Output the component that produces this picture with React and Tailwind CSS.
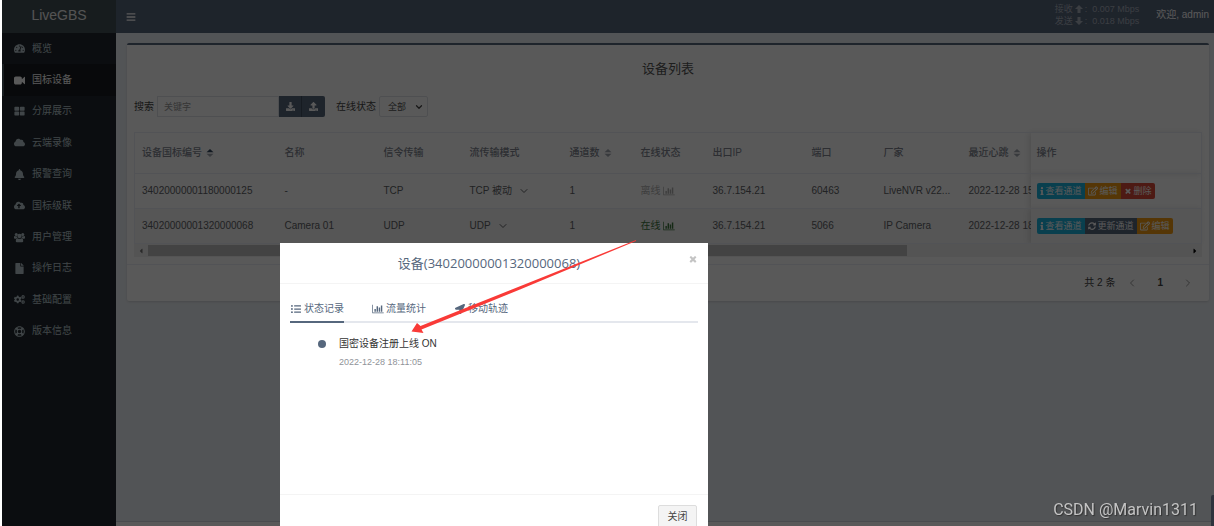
import React, { useState } from 'react'
import {
  FaTachometerAlt, FaCloud, FaBell, FaCloudUploadAlt, FaFile, FaCogs, FaRegLifeRing, FaBars,
  FaDownload, FaUpload, FaInfo, FaRegEdit, FaListUl, FaLocationArrow, FaSyncAlt, FaCaretLeft, FaCaretRight,
} from 'react-icons/fa'
import { ChevronDown, ChevronLeft, ChevronRight } from 'lucide-react'

const BarChart = ({ className }) => (
  <svg viewBox="0 0 2048 1792" fill="currentColor" className={className}>
    <path d="M640 896v512H384V896h256zm384-512v1024H768V384h256zm1024 1152v128H0V128h128v1408h1920zM1408 640v768h-256V640h256zm384-384v1152h-256V256h256z" />
  </svg>
)

const VideoCamera = ({ className }) => (
  <svg viewBox="0 0 1792 1792" fill="currentColor" className={className}>
    <path d="M1792 352v1088q0 42-39 59-13 5-25 5-27 0-45-19l-403-403v166q0 119-84.500 203.500t-203.500 84.500h-704q-119 0-203.500-84.500t-84.500-203.500v-704q0-119 84.500-203.500t203.500-84.500h704q119 0 203.500 84.500t84.500 203.500v165l403-402q18-19 45-19 12 0 25 5 39 17 39 59z" />
  </svg>
)

const Tiles = ({ className }) => (
  <svg viewBox="0 0 1792 1792" fill="currentColor" className={className}>
    <path d="M832 1024v384q0 52-38 90t-90 38h-512q-52 0-90-38t-38-90v-384q0-52 38-90t90-38h512q52 0 90 38t38 90zm0-768v384q0 52-38 90t-90 38h-512q-52 0-90-38t-38-90v-384q0-52 38-90t90-38h512q52 0 90 38t38 90zm896 768v384q0 52-38 90t-90 38h-512q-52 0-90-38t-38-90v-384q0-52 38-90t90-38h512q52 0 90 38t38 90zm0-768v384q0 52-38 90t-90 38h-512q-52 0-90-38t-38-90v-384q0-52 38-90t90-38h512q52 0 90 38t38 90z" />
  </svg>
)

const Users = ({ className }) => (
  <svg viewBox="0 0 22 20" fill="currentColor" className={className}>
    <circle cx="4.500" cy="4" r="3" />
    <circle cx="17.500" cy="4" r="3" />
    <circle cx="11" cy="7" r="4.300" />
    <path d="M0 11V9.500Q0 7 1.500 7Q4 8.500 6 7.500Q6 9.500 7 11Q5 11 3.500 12.500H2Q0 12.500 0 11zM22 11V9.500Q22 7 20.500 7Q18 8.500 16 7.500Q16 9.500 15 11Q17 11 18.500 12.500H20Q22 12.500 22 11zM6.500 11.500Q11 14.500 15.500 11.500Q18.500 12 18.500 17Q18.500 19.500 16 19.500H6Q3.500 19.500 3.500 17Q3.500 12 6.500 11.500z" />
  </svg>
)

const Times = ({ className }) => (
  <svg viewBox="0 0 1792 1792" fill="currentColor" className={className}>
    <path d="M1490 1322q0 40-28 68l-136 136q-28 28-68 28t-68-28l-294-294-294 294q-28 28-68 28t-68-28l-136-136q-28-28-28-68t28-68l294-294-294-294q-28-28-28-68t28-68l136-136q28-28 68-28t68 28l294 294 294-294q28-28 68-28t68 28l136 136q28 28 28 68t-28 68l-294 294 294 294q28 28 28 68z" />
  </svg>
)

const Arrow = ({ className }) => (
  <svg viewBox="0 0 8 8" fill="currentColor" className={className}>
    <path d="M4 0L8 4H5.500V8H2.500V4H0z" />
  </svg>
)

const menus = [
  { icon: FaTachometerAlt, title: '概览' },
  { icon: VideoCamera, title: '国标设备', active: true },
  { icon: Tiles, title: '分屏展示' },
  { icon: FaCloud, title: '云端录像' },
  { icon: FaBell, title: '报警查询' },
  { icon: FaCloudUploadAlt, title: '国标级联' },
  { icon: Users, title: '用户管理' },
  { icon: FaFile, title: '操作日志' },
  { icon: FaCogs, title: '基础配置' },
  { icon: FaRegLifeRing, title: '版本信息' },
]

const columns = [
  { title: '设备国标编号', width: 'w-[143px]', sort: 'asc' },
  { title: '名称', width: 'w-[99px]' },
  { title: '信令传输', width: 'w-[86px]' },
  { title: '流传输模式', width: 'w-[100px]' },
  { title: '通道数', width: 'w-[71px]', sort: 'none' },
  { title: '在线状态', width: 'w-[72px]' },
  { title: '出口IP', width: 'w-[99px]' },
  { title: '端口', width: 'w-[72px]' },
  { title: '厂家', width: 'w-[85px]' },
  { title: '最近心跳', width: '', sort: 'none' },
]

const devices = [
  {
    id: '34020000001180000125', name: '-', transport: 'TCP', stream: 'TCP 被动', channels: 1, online: false,
    ip: '36.7.154.21', port: 60463, vendor: 'LiveNVR v22...', heartbeat: '2022-12-28 15', actions: ['view', 'edit', 'remove'],
  },
  {
    id: '34020000001320000068', name: 'Camera 01', transport: 'UDP', stream: 'UDP', channels: 1, online: true,
    ip: '36.7.154.21', port: 5066, vendor: 'IP Camera', heartbeat: '2022-12-28 18', actions: ['view', 'refresh', 'edit'],
  },
]

const actionMap = {
  view: { icon: FaInfo, title: '查看通道', color: 'bg-[#1cb5e0]' },
  refresh: { icon: FaSyncAlt, title: '更新通道', color: 'bg-[#56677d]' },
  edit: { icon: FaRegEdit, title: '编辑', color: 'bg-[#f39c12]' },
  remove: { icon: Times, title: '删除', color: 'bg-[#dd4b39]' },
}

const SortIcon = ({ sort }) => (
  <svg viewBox="0 0 8 10" className="inline-block w-2 h-2.5 ml-1 align-middle">
    <path d="M4 1L7.5 4.3H.5z" fill={sort === 'asc' ? '#34495e' : '#a0a6b0'} />
    <path d="M4 9L7.5 5.7H.5z" fill="#a0a6b0" />
  </svg>
)

const Sidebar = () => (
  <aside className="w-[114px] shrink-0 bg-[#20272e]">
    <a href="#" className="flex h-[33px] items-center justify-center bg-[#435058] pb-1 text-sm text-[#eee]">LiveGBS</a>
    <nav>
      <ul className="grid h-[314px] auto-rows-fr">
        {menus.map(({ icon: Icon, title, active }) => (
          <li key={title} className="flex">
            <a
              href="#"
              className={`flex flex-1 items-center gap-[7px] border-l-2 pl-2.5 ${active ? 'border-[#46545c] bg-[#181c20] text-white' : 'border-transparent text-[#b8c7ce]'}`}
            >
              <Icon className="size-[11px]" />
              <span>{title}</span>
            </a>
          </li>
        ))}
      </ul>
    </nav>
  </aside>
)

const TopBar = () => (
  <header className="flex h-[33px] items-center justify-between bg-[#58677d] pl-2.5 pr-[5px] text-white">
    <button type="button" aria-label="菜单"><FaBars className="size-2.5" /></button>
    <div className="flex items-center gap-[17px]">
      <div className="pb-1 text-[9px] leading-3 text-[#a9b1bd]">
        <div className="flex items-center gap-0.5">接收 <Arrow className="size-2" /><span>:</span><span className="ml-[3px]">0.007 Mbps</span></div>
        <div className="flex items-center gap-0.5">发送 <Arrow className="size-2 rotate-180" /><span>:</span><span className="ml-[3px]">0.018 Mbps</span></div>
      </div>
      <a href="#" className="pb-1">欢迎, admin</a>
    </div>
  </header>
)

const DeviceTable = () => (
  <table className="w-full table-fixed border border-[#ebeef5] text-left text-[#606266]">
    <thead>
      <tr className="h-[41px] border-b border-[#ebeef5] text-[#808590]">
        {columns.map((col) => (
          <th key={col.title} className={`overflow-hidden whitespace-nowrap pl-[7px] font-medium ${col.width}`}>
            {col.title}{col.sort && <SortIcon sort={col.sort} />}
          </th>
        ))}
        <th className="w-[171px] pl-1.5 font-medium shadow-[-2px_0_6px_rgba(0,0,0,0.12)]">操作</th>
      </tr>
    </thead>
    <tbody>
      {devices.map((d, i) => (
        <tr key={d.id} className={`h-[35px] border-b border-[#ebeef5] ${i % 2 ? 'bg-[#f5f5f5]' : ''}`}>
          <td className="pl-[7px]">{d.id}</td>
          <td className="pl-[7px]">{d.name}</td>
          <td className="pl-[7px]">{d.transport}</td>
          <td className="pl-[7px]">
            <button type="button" className="flex items-center gap-1.5">{d.stream}<ChevronDown className="size-3" strokeWidth={2} /></button>
          </td>
          <td className="pl-[7px]">{d.channels}</td>
          <td className="pl-[7px]">
            <a href="#" className={`flex items-center gap-0.5 ${d.online ? 'text-[#3c763d]' : 'text-[#b0b0b0]'}`}>
              {d.online ? '在线' : '离线'}<BarChart className="h-2.5 w-3" />
            </a>
          </td>
          <td className="pl-[7px]">{d.ip}</td>
          <td className="pl-[7px]">{d.port}</td>
          <td className="whitespace-nowrap pl-[7px]">{d.vendor}</td>
          <td className="overflow-hidden whitespace-nowrap pl-[7px]">{d.heartbeat}</td>
          <td className="pl-1.5 shadow-[-2px_0_6px_rgba(0,0,0,0.12)]">
            <div className="flex w-fit overflow-hidden rounded-xs">
              {d.actions.map((key) => {
                const { icon: Icon, title, color } = actionMap[key]
                return (
                  <button key={key} type="button" className={`flex h-4 items-center gap-0.5 whitespace-nowrap px-[3px] text-[9px] text-white ${color}`}>
                    <Icon className={key === 'view' ? 'h-2 w-1' : key === 'edit' ? 'size-2.5' : 'size-2'} />{title}
                  </button>
                )
              })}
            </div>
          </td>
        </tr>
      ))}
    </tbody>
  </table>
)

const DevicePanel = () => (
  <section className="rounded-xs border-t-2 border-[#56677d] bg-white shadow-sm">
    <h1 className="pt-3.5 text-center text-[13px] leading-5 text-[#555]">设备列表</h1>
    <form className="flex items-center px-[7px] pt-[17px] pb-[15px]">
      <label htmlFor="keyword" className="mr-[3px]">搜索</label>
      <input id="keyword" placeholder="关键字" className="h-[21px] w-[122px] border border-[#e0e3e8] px-1.5 text-[9px] outline-none placeholder:text-[#999]" />
      <button type="button" aria-label="导入" className="flex h-[21px] w-[23px] items-center justify-center border-r border-[#3f4d5f] bg-[#56677d] text-white"><FaDownload className="size-[9px]" /></button>
      <button type="button" aria-label="导出" className="flex h-[21px] w-[23px] items-center justify-center rounded-r-xs bg-[#56677d] text-white"><FaUpload className="size-[9px]" /></button>
      <label htmlFor="online" className="mr-[3px] ml-[11px]">在线状态</label>
      <div className="relative">
        <select id="online" className="h-[21px] w-[49px] appearance-none rounded-xs border border-[#e0e3e8] pl-2 text-[9px] text-[#555]">
          <option>全部</option>
        </select>
        <ChevronDown className="pointer-events-none absolute top-1.5 right-1 size-2.5" strokeWidth={3} />
      </div>
    </form>
    <div className="px-[7px]">
      <DeviceTable />
      <div className="flex h-[13px] items-center bg-[#f1f1f1]">
        <FaCaretLeft className="mx-[3px] size-2 text-[#777]" />
        <div className="flex-1"><div className="h-[11px] w-[73%] bg-[#c1c1c1]" /></div>
        <FaCaretRight className="mx-[3px] size-2 text-black" />
      </div>
    </div>
    <div className="mt-[7px] flex h-[37px] items-center justify-end border-t border-[#ebeef5] pr-[15px]">
      <span>共 2 条</span>
      <button type="button" aria-label="上一页" className="ml-[11px] text-[#999]"><ChevronLeft className="size-3" strokeWidth={2} /></button>
      <button type="button" className="mx-[19px] font-bold">1</button>
      <button type="button" aria-label="下一页" className="text-[#999]"><ChevronRight className="size-3" strokeWidth={2} /></button>
    </div>
  </section>
)

const tabs = [
  { icon: FaListUl, title: '状态记录' },
  { icon: BarChart, title: '流量统计' },
  { icon: FaLocationArrow, title: '移动轨迹' },
]

const DeviceModal = ({ onClose }) => {
  const [tab, setTab] = useState('状态记录')

  return (
    <div className="fixed inset-0 left-0.5 overflow-hidden bg-black/65 pt-[243px] pl-[278px]">
      <div role="dialog" aria-label="设备" className="w-[428px] bg-white text-[#56677d]">
        <div className="flex h-[41px] items-center border-b border-[#f4f4f4] px-2.5">
          <h2 className="flex-1 text-center font-['Open_Sans','Noto_Sans_CJK_SC',sans-serif] text-[13px]">设备(34020000001320000068)</h2>
          <button type="button" aria-label="关闭窗口" onClick={onClose} className="pb-2 text-[#c4c4c4]"><Times className="size-2.5" /></button>
        </div>
        <div className="h-[210px] px-2.5 pt-[15px]">
          <div role="tablist" className="flex gap-7 border-b-2 border-[#e4e7ed]">
            {tabs.map(({ icon: Icon, title }) => (
              <button
                key={title}
                type="button"
                role="tab"
                aria-selected={tab === title}
                onClick={() => setTab(title)}
                className={`-mb-0.5 flex h-6 items-center gap-0.5 border-b-2 pb-0.5 ${tab === title ? 'border-[#56677d]' : 'border-transparent'}`}
              >
                <Icon className="h-2.5 w-3" />{title}
              </button>
            ))}
          </div>
          <ul className="pt-3 pl-7">
            <li className="flex gap-[13px]">
              <i className="mt-[5px] size-2 rounded-full bg-[#56677d]" />
              <div>
                <p className="leading-[18px] text-[#333]">国密设备注册上线 ON</p>
                <time className="block leading-[18px] text-[9px] text-[#909399]">2022-12-28 18:11:05</time>
              </div>
            </li>
          </ul>
        </div>
        <div className="flex h-[50px] items-start justify-end border-t border-[#f4f4f4] px-[11px] pt-2.5">
          <button type="button" onClick={onClose} className="h-[23px] w-[39px] rounded-xs border border-[#ddd] bg-[#f4f4f4] text-[#444]">关闭</button>
        </div>
      </div>
    </div>
  )
}

const App = () => {
  const [open, setOpen] = useState(true)

  return (
    <div className="relative flex h-screen overflow-hidden bg-white pl-0.5 font-['Liberation_Sans','Noto_Sans_CJK_SC',sans-serif] text-[10px] leading-[14px] text-[#444]">
      <Sidebar />
      <div className="flex min-w-0 flex-1 flex-col bg-[#ecf0f5]">
        <TopBar />
        <main className="flex-1 pt-2.5 pr-[5px] pl-[11px]">
          <DevicePanel />
        </main>
        <footer className="h-[5px] border-t border-[#d2d6de] bg-white" />
      </div>
      {open && <DeviceModal onClose={() => setOpen(false)} />}
      <svg viewBox="0 0 226 94" className="pointer-events-none absolute top-[240px] left-[411px] h-[94px] w-[226px]">
        <path d="M225 0L109 46.300L9.500 86L6 83L.5 91.500L12.500 93L10.500 89.500L109 49.500L225 1z" fill="#f93a37" />
      </svg>
      <span className="absolute right-4 bottom-1 font-['Roboto',sans-serif] text-base leading-6 text-[#c4c4c4] [text-shadow:1px_1px_1px_#333]">CSDN @Marvin1311</span>
      <span className="absolute right-0 bottom-0 h-[31px] w-[3px] rounded-tl-xs bg-[#2e323c]" />
    </div>
  )
}

export default App
